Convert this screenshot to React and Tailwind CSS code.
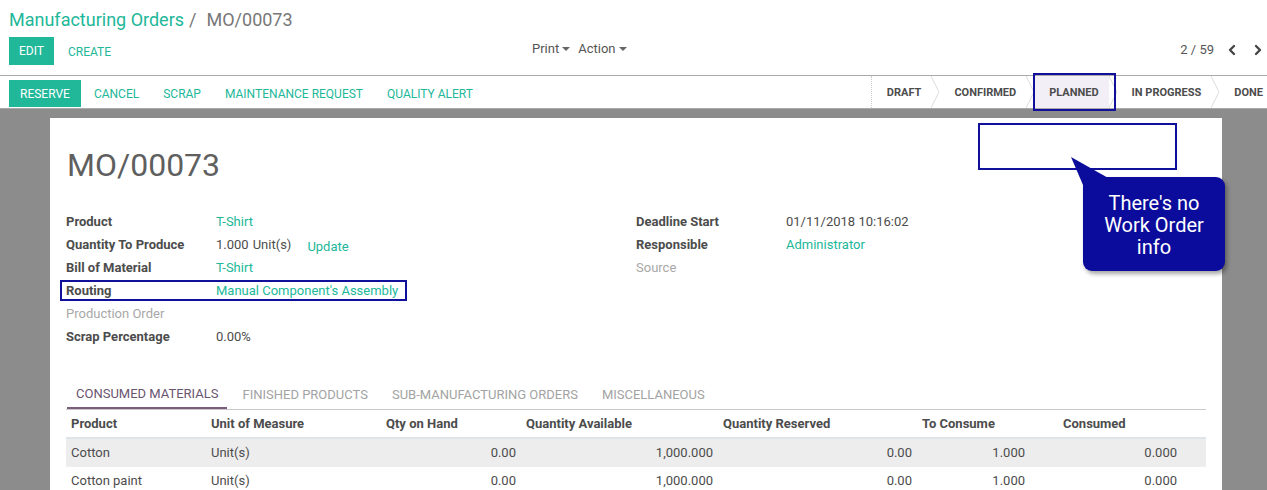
import { ChevronLeft, ChevronRight } from 'lucide-react';

const TEAL = 'text-[#21b799]';

const Chevron = () => (
  <svg width="8" height="32" viewBox="0 0 8 32" className="shrink-0">
    <polyline points="0,0 8,16 0,32" fill="none" stroke="#dcdcdc" strokeWidth="1" />
  </svg>
);

const Caret = () => (
  <svg width="8" height="5" viewBox="0 0 8 5" className="ml-[3px] mt-[1px]">
    <polygon points="0,0 8,0 4,4" fill="#666" />
  </svg>
);

const Field = ({ label, muted, children }) => (
  <div className="h-[23px] flex items-center text-[13px]">
    <div className={`w-[150px] shrink-0 font-bold ${muted ? 'text-[#a8a8a8] font-normal' : 'text-[#4c4c4c]'}`}>{label}</div>
    <div className="text-[#4c4c4c] flex items-center">{children}</div>
  </div>
);

const cols = 'grid grid-cols-[140px_175px_140px_197px_199px_141px_124px_24px]';

const rows = [
  { product: 'Cotton', uom: 'Unit(s)', hand: '0.00', avail: '1,000.000', res: '0.00', toc: '1.000', cons: '0.000', hover: true },
  { product: 'Cotton paint', uom: 'Unit(s)', hand: '0.00', avail: '1,000.000', res: '0.00', toc: '1.000', cons: '0.000' },
];

export default function App() {
  return (
    <div className="relative w-[1267px] h-[490px] overflow-hidden bg-white font-[Roboto,sans-serif] flex flex-col">
      {/* Control panel */}
      <div className="px-[9px]">
        <div className="pt-[9px] h-[37px] text-[18px] leading-[22px] flex items-start">
          <span className={TEAL}>Manufacturing Orders</span>
          <span className="text-[#777] ml-[5px]">/</span>
          <span className="text-[#777] ml-[10px]">MO/00073</span>
        </div>
        <div className="h-[38px] flex items-start">
          <div className="w-[523px] flex items-center">
            <button className="h-[28px] px-[10px] bg-[#21b799] text-white text-[12px]">EDIT</button>
            <button className={`h-[28px] px-[14px] pt-[2px] text-[12px] ${TEAL}`}>CREATE</button>
          </div>
          <div className="h-[23px] flex items-center text-[13px] text-[#555]">
            <span>Print</span>
            <Caret />
            <span className="ml-[8px]">Action</span>
            <Caret />
          </div>
          <div className="ml-auto mr-[-8px] h-[26px] flex items-center text-[13px] text-[#555]">
            <span className="mr-[10px]">2 / 59</span>
            <ChevronLeft size={16} strokeWidth={3.5} className="text-[#444]" />
            <ChevronRight size={16} strokeWidth={3.5} className="text-[#444] ml-[10px]" />
          </div>
        </div>
      </div>

      {/* Status bar */}
      <div className="h-[34px] border-t border-b border-[#aaa] flex">
        <div className="pl-[9px] pt-[4px] flex items-start text-[12px]">
          <button className="h-[27px] px-[11px] bg-[#21b799] text-white">RESERVE</button>
          <button className={`h-[27px] pl-[13px] pr-[12px] ${TEAL}`}>CANCEL</button>
          <button className={`h-[27px] px-[12px] ${TEAL}`}>SCRAP</button>
          <button className={`h-[27px] px-[12px] ${TEAL}`}>MAINTENANCE REQUEST</button>
          <button className={`h-[27px] px-[12px] ${TEAL}`}>QUALITY ALERT</button>
        </div>
        <div className="ml-auto flex h-full text-[11px] font-bold text-[#4c4c4c] border-l border-dotted border-[#ccc]">
          <div className="flex items-center pt-[3px] pl-[15px] pr-[10px]">DRAFT</div>
          <Chevron />
          <div className="flex items-center pt-[3px] pl-[15px] pr-[10px]">CONFIRMED</div>
          <Chevron />
          <div className="flex items-center pt-[3px] pl-[15px] pr-[10px] bg-[#f2eff6]">PLANNED</div>
          <Chevron />
          <div className="flex items-center pt-[3px] pl-[15px] pr-[10px]">IN PROGRESS</div>
          <Chevron />
          <div className="flex items-center pt-[3px] pl-[15px] pr-[4px]">DONE</div>
        </div>
      </div>

      {/* Sheet area */}
      <div className="flex-1 bg-[#8c8c8c] pt-[9px] pl-[50px]">
        <div className="w-[1172px] h-full bg-white pt-[28px] px-[16px]">
          <h1 className="text-[32px] leading-[38px] text-[#5f5f5f] ml-[1px]">MO/00073</h1>

          <div className="mt-[26px] grid grid-cols-2">
            <div>
              <Field label="Product"><span className={TEAL}>T-Shirt</span></Field>
              <Field label="Quantity To Produce">
                <span>1.000</span>
                <span className="ml-[4px]">Unit(s)</span>
                <span className={`ml-[16px] mt-[5px] ${TEAL}`}>Update</span>
              </Field>
              <Field label="Bill of Material"><span className={TEAL}>T-Shirt</span></Field>
              <div className="relative">
                <Field label="Routing"><span className={TEAL}>Manual Component's Assembly</span></Field>
                <div className="absolute left-[-6px] top-[1px] w-[347px] h-[21px] border-2 border-[#10109a]" />
              </div>
              <Field label="Production Order" muted />
              <Field label="Scrap Percentage">0.00%</Field>
            </div>
            <div>
              <Field label="Deadline Start">01/11/2018 10:16:02</Field>
              <Field label="Responsible"><span className={TEAL}>Administrator</span></Field>
              <Field label="Source" muted />
            </div>
          </div>

          {/* Tabs */}
          <div className="mt-[33px] flex border-b border-[#c8c8c8] text-[13px]">
            <div className="h-[28px] flex items-center px-[9px] ml-[1px] text-[#6a5470] border-b-2 border-[#7a5f7c] -mb-px">CONSUMED MATERIALS</div>
            <div className="h-[28px] flex items-center px-[12px] ml-[3px] text-[#a3a3a3]">FINISHED PRODUCTS</div>
            <div className="h-[28px] flex items-center px-[12px] text-[#a3a3a3]">SUB-MANUFACTURING ORDERS</div>
            <div className="h-[28px] flex items-center px-[12px] text-[#a3a3a3]">MISCELLANEOUS</div>
          </div>

          {/* Table */}
          <div className="text-[13px] text-[#4c4c4c]">
            <div className={`${cols} h-[29px] items-center font-bold border-b-2 border-[#dfe3ea]`}>
              <div className="pl-[5px]">Product</div>
              <div className="pl-[5px]">Unit of Measure</div>
              <div className="pl-[5px]">Qty on Hand</div>
              <div className="pl-[5px]">Quantity Available</div>
              <div className="pl-[5px]">Quantity Reserved</div>
              <div className="pl-[5px]">To Consume</div>
              <div className="pl-[5px]">Consumed</div>
              <div />
            </div>
            {rows.map((r) => (
              <div key={r.product} className={`${cols} h-[28px] items-center ${r.hover ? 'bg-[#ededed]' : ''}`}>
                <div className="pl-[5px]">{r.product}</div>
                <div className="pl-[5px]">{r.uom}</div>
                <div className="pr-[5px] text-right">{r.hand}</div>
                <div className="pr-[5px] text-right">{r.avail}</div>
                <div className="pr-[5px] text-right">{r.res}</div>
                <div className="pr-[33px] text-right">{r.toc}</div>
                <div className="pr-[5px] text-right">{r.cons}</div>
                <div />
              </div>
            ))}
          </div>
        </div>
      </div>

      {/* Annotations */}
      <div className="absolute left-[1033px] top-[73px] w-[83px] h-[38px] border-2 border-[#10109a]" />
      <div className="absolute left-[978px] top-[123px] w-[199px] h-[47px] border-2 border-[#10109a]" />
      <svg className="absolute left-[1066px] top-[152px]" width="50" height="45" viewBox="0 0 50 45">
        <polygon points="5,5 44,27 20,40" fill="#0c0c9c" />
      </svg>
      <div className="absolute left-[1083px] top-[177px] w-[142px] h-[94px] rounded-[9px] bg-[#0c0c9c] shadow-[2px_3px_4px_rgba(0,0,0,0.35)] flex items-center justify-center text-center text-white text-[20px] leading-[22px]">
        <div className="pt-[2px]">There's no<br />Work Order<br />info</div>
      </div>
    </div>
  );
}
